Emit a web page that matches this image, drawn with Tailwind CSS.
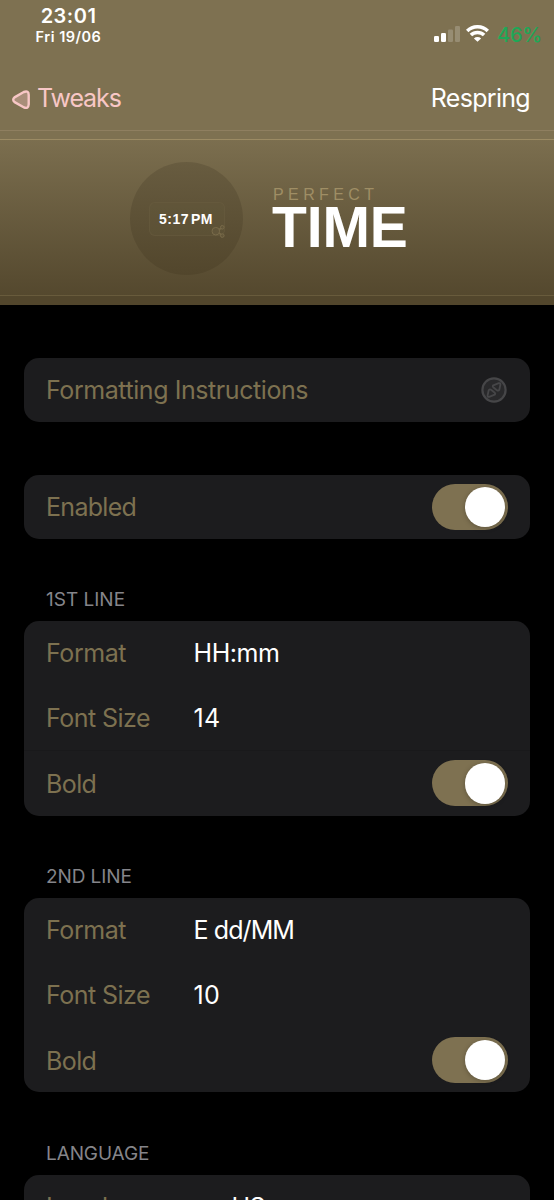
<!DOCTYPE html>
<html lang="en">
<head>
<meta charset="utf-8">
<meta name="viewport" content="width=device-width, initial-scale=1">
<title>Perfect Time</title>
<script src="https://cdn.jsdelivr.net/npm/@tailwindcss/browser@4"></script>
</head>
<body class="bg-black">
<div class="w-[554px] h-[1200px] overflow-hidden bg-black font-['Inter','Liberation_Sans',sans-serif] text-[25px] leading-[30px] tracking-[-0.43px] text-[#7d7150]">

  <!-- Status and navigation bars -->
  <header class="h-[130px] bg-[#7e7151] text-white flex flex-col">
    <div class="h-[66px] flex justify-between pl-[35px] pr-[12px]">
      <div class="w-[67px] pt-[5px] flex flex-col items-center whitespace-nowrap">
        <span class="text-[20px] leading-[22px] font-semibold tracking-[0.5px]">23:01</span>
        <span class="text-[14.5px] leading-[19px] font-semibold tracking-[0.5px]">Fri 19/06</span>
      </div>
      <div class="flex items-start pt-[24px]">
        <svg class="mt-[2px] mr-[6px]" width="26" height="16" viewBox="0 0 26 16" fill="#fff">
          <rect x="0" y="10" width="5" height="6" rx="1.3"/>
          <rect x="7" y="7" width="5" height="9" rx="1.3"/>
          <rect x="14" y="3.5" width="5" height="12.5" rx="1.3" opacity=".2"/>
          <rect x="21" y="0" width="5" height="16" rx="1.3" opacity=".2"/>
        </svg>
        <svg class="mt-[1px] mr-[8px]" width="23" height="17" viewBox="0 0 23 17" fill="none" stroke="#fff" stroke-width="3.5">
          <path d="M1.2 6A14.6 14.6 0 0 1 21.8 6"/>
          <path d="M4.9 10.1A9.4 9.4 0 0 1 18.1 10.1"/>
          <path d="M11.5 16.8L7.9 13.4A5.1 5.1 0 0 1 15.1 13.4Z" fill="#fff" stroke="none"/>
        </svg>
        <span class="text-[20px] leading-[22px] tracking-[-0.2px] font-medium text-[#1fa757]">46%</span>
      </div>
    </div>
    <div class="h-[64px] flex justify-between items-center pl-[12px] pr-[24px]">
      <div class="flex items-center text-[#f8c7c6]">
        <svg class="mr-[7px] mt-[3px]" width="18" height="20" viewBox="0 0 18 20" fill="#f8c7c6" fill-opacity=".35" stroke="#f8c7c6" stroke-width="2.4" stroke-linejoin="round">
          <path d="M2.5 7.4L11.8 2Q16.7 .2 16.7 5V14.3Q16.5 18.9 12.1 17.5L2.6 12.1Q-.1 9.8 2.5 7.4Z"/>
        </svg>
        <span class="tracking-[-1.1px]">Tweaks</span>
      </div>
      <span class="tracking-[-0.7px]">Respring</span>
    </div>
  </header>

  <!-- Banner -->
  <section class="h-[175px] bg-linear-to-b from-[#7e7151] to-[#52462c] flex flex-col">
    <div class="h-[10px] bg-[#7e7151] border-t border-t-[#8f7f60] border-b border-b-[#9c8b64]"></div>
    <div class="h-[155px] flex items-start pl-[130px]">
      <div class="relative mt-[22px] size-[113px] rounded-full bg-linear-to-b from-[#685c40] to-[#52462c] flex items-center justify-center">
        <div class="w-[76px] h-[34px] mt-[1px] pr-[1px] rounded-[6px] border border-[#6b5f44]/40 bg-[#65583b]/30 flex items-center justify-center text-white font-['Liberation_Sans',sans-serif] font-bold text-[14px] leading-[16px] tracking-[0.5px] whitespace-nowrap">5:17<span class="ml-[2px]">PM</span></div>
        <svg class="absolute left-[81px] top-[63px]" width="14" height="13" viewBox="0 0 14 13" fill="#62563a" stroke="#796b4a" stroke-width="1">
          <path d="M6 6.2L11 2.5M6 6.2L11 10.5" stroke-width="1.6"/>
          <circle cx="4.8" cy="6.2" r="3.8"/><circle cx="11.3" cy="2.3" r="1.8"/><circle cx="11.3" cy="10.6" r="1.8"/>
        </svg>
      </div>
      <div class="ml-[29px] mt-[47px] font-['Liberation_Sans',sans-serif] whitespace-nowrap">
        <div class="pl-[1px] text-[16px] leading-[16px] tracking-[4.4px] text-[#9f8e65]">PERFECT</div>
        <div class="text-[57px] leading-[48px] mt-0 font-bold tracking-[-0.1px] text-white">TIME</div>
      </div>
    </div>
    <div class="h-[10px] border-t border-t-[#685b3c] bg-[#52462c]"></div>
  </section>

  <main class="px-[24px] pt-[52.5px]">
    <div class="h-[64.5px] rounded-[15px] bg-[#1c1c1e] pl-[22px] pr-[23px] flex items-center justify-between">
      <span class="pt-[1px]">Formatting Instructions</span>
      <svg width="26" height="26" viewBox="0 0 26 26" fill="#29292b" stroke="#464648" stroke-width="2.2" stroke-linejoin="round">
        <circle cx="13" cy="13" r="11.6"/>
        <path stroke-width="1.8" d="M12.3 8.3L17.8 6.1Q19.6 5.7 19.4 7.5L18.3 12.8Q17.3 14.4 15.9 13.2L12.2 10.2Q11.2 9.2 12.3 8.3Z"/>
        <path stroke-width="1.8" d="M13.7 17.7L8.2 19.9Q6.4 20.3 6.6 18.5L7.7 13.2Q8.7 11.6 10.1 12.8L13.8 15.8Q14.8 16.8 13.7 17.7Z"/>
      </svg>
    </div>

    <div class="mt-[52.5px] h-[64.5px] rounded-[15px] bg-[#1c1c1e] pl-[22px] pr-[22px] flex items-center justify-between">
      <span class="pt-[1px] tracking-[-0.7px]">Enabled</span>
      <div class="w-[76px] h-[46px] rounded-full bg-[#7e7151] p-[2.75px] flex justify-end"><div class="size-[40.5px] rounded-full bg-white shadow-[0_1px_5px_rgba(0,0,0,0.25)]"></div></div>
    </div>

    <h2 class="mt-[50px] h-[32px] pl-[22px] text-[19px] leading-[21px] tracking-[0px] text-[#85858a]">1ST LINE</h2>
    <div class="h-[194.5px] rounded-[15px] bg-[#1c1c1e] px-[22px]">
      <div class="h-[64.5px] flex items-center"><span class="w-[147.5px]">Format</span><span class="text-white">HH:mm</span></div>
      <div class="h-[64.5px] flex items-center"><span class="w-[147.5px] tracking-[-0.55px]">Font Size</span><span class="text-white tracking-[0.4px]">14</span></div>
      <div class="-mx-[22px] border-t border-[#19191b]"></div>
      <div class="h-[64.5px] flex items-center justify-between"><span class="pt-[1px] tracking-[-0.6px]">Bold</span>
        <div class="w-[76px] h-[46px] rounded-full bg-[#7e7151] p-[2.75px] flex justify-end"><div class="size-[40.5px] rounded-full bg-white shadow-[0_1px_5px_rgba(0,0,0,0.25)]"></div></div>
      </div>
    </div>

    <h2 class="mt-[50px] h-[32px] pl-[22px] text-[19px] leading-[21px] tracking-[-0.1px] text-[#85858a]">2ND LINE</h2>
    <div class="h-[194.5px] rounded-[15px] bg-[#1c1c1e] px-[22px]">
      <div class="h-[64.5px] flex items-center"><span class="w-[147.5px]">Format</span><span class="text-white tracking-[-0.9px]">E dd/MM</span></div>
      <div class="h-[65.5px] flex items-center"><span class="w-[147.5px] tracking-[-0.55px]">Font Size</span><span class="text-white tracking-[0.4px]">10</span></div>
      <div class="h-[65px] flex items-center justify-between"><span class="pt-[1px] tracking-[-0.6px]">Bold</span>
        <div class="w-[76px] h-[46px] rounded-full bg-[#7e7151] p-[2.75px] flex justify-end"><div class="size-[40.5px] rounded-full bg-white shadow-[0_1px_5px_rgba(0,0,0,0.25)]"></div></div>
      </div>
    </div>

    <h2 class="mt-[50.5px] h-[32px] pl-[22px] text-[19px] leading-[21px] tracking-[-0.1px] text-[#85858a]">LANGUAGE</h2>
    <div class="h-[64.5px] rounded-t-[15px] bg-[#1c1c1e] px-[22px] flex items-center"><span class="w-[147.5px]">Locale</span><span class="text-white tracking-[-0.6px]">en_US</span></div>
  </main>
</div>
</body>
</html>
